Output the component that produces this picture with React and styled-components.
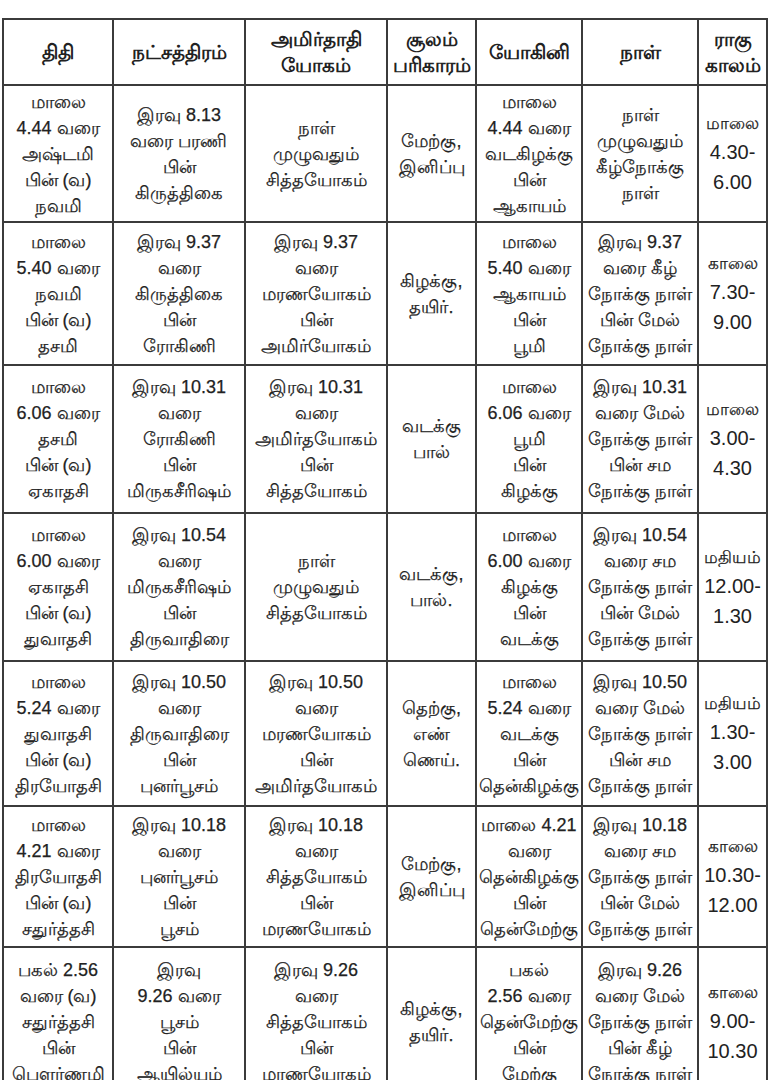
import styled, { createGlobalStyle } from "styled-components";

const GlobalStyle = createGlobalStyle`
  body {
    margin: 0;
    background: #fff;
    font-family: "Liberation Sans", "Noto Sans", sans-serif;
    color: #222;
  }
`;

const Page = styled.div`
  padding: 18px 0 0 2px;
  overflow: hidden;
`;

const Table = styled.table`
  border-collapse: collapse;
  table-layout: fixed;
  width: 764px;
`;

const Head = styled.th`
  border: 2.5px solid #3b3b3b;
  height: 64px;
  padding: 0;
  font-size: 20px;
  font-weight: 700;
  line-height: 26px;
  text-align: center;
  vertical-align: middle;
  white-space: nowrap;
  overflow: hidden;
`;

const Row = styled.tr`
  height: ${(p) => p.$h}px;
`;

const Cell = styled.td`
  border: 2.5px solid #3b3b3b;
  padding: 2px 0;
  font-size: 18px;
  font-weight: 400;
  line-height: 26px;
  text-align: center;
  vertical-align: middle;
  white-space: nowrap;
  overflow: hidden;
  -webkit-text-stroke: 0.25px #222;
`;

const Label = styled.span`
  font-size: 17px;
`;

const Time = styled.span`
  font-size: 20px;
  line-height: 30px;
  -webkit-text-stroke: 0;
`;

const cols = [110, 132, 142, 89, 106, 116, 69];

const heads = [
  ["திதி"],
  ["நட்சத்திரம்"],
  ["அமிர்தாதி", "யோகம்"],
  ["சூலம்", "பரிகாரம்"],
  ["யோகினி"],
  ["நாள்"],
  ["ராகு", "காலம்"],
];

const rows = [
  {
    h: 137,
    cells: [
      ["மாலை", "4.44 வரை", "அஷ்டமி", "பின் (வ)", "நவமி"],
      ["இரவு 8.13", "வரை பரணி", "பின்", "கிருத்திகை"],
      ["நாள்", "முழுவதும்", "சித்தயோகம்"],
      ["மேற்கு,", "இனிப்பு"],
      ["மாலை", "4.44 வரை", "வடகிழக்கு", "பின்", "ஆகாயம்"],
      ["நாள்", "முழுவதும்", "கீழ்நோக்கு", "நாள்"],
    ],
    rahu: ["மாலை", "4.30-", "6.00"],
  },
  {
    h: 143,
    cells: [
      ["மாலை", "5.40 வரை", "நவமி", "பின் (வ)", "தசமி"],
      ["இரவு 9.37", "வரை", "கிருத்திகை", "பின்", "ரோகிணி"],
      ["இரவு 9.37", "வரை", "மரணயோகம்", "பின்", "அமிர்யோகம்"],
      ["கிழக்கு,", "தயிர்."],
      ["மாலை", "5.40 வரை", "ஆகாயம்", "பின்", "பூமி"],
      ["இரவு 9.37", "வரை கீழ்", "நோக்கு நாள்", "பின் மேல்", "நோக்கு நாள்"],
    ],
    rahu: ["காலை", "7.30-", "9.00"],
  },
  {
    h: 148,
    cells: [
      ["மாலை", "6.06 வரை", "தசமி", "பின் (வ)", "ஏகாதசி"],
      ["இரவு 10.31", "வரை", "ரோகிணி", "பின்", "மிருகசீரிஷம்"],
      ["இரவு 10.31", "வரை", "அமிர்தயோகம்", "பின்", "சித்தயோகம்"],
      ["வடக்கு", "பால்"],
      ["மாலை", "6.06 வரை", "பூமி", "பின்", "கிழக்கு"],
      ["இரவு 10.31", "வரை மேல்", "நோக்கு நாள்", "பின் சம", "நோக்கு நாள்"],
    ],
    rahu: ["மாலை", "3.00-", "4.30"],
  },
  {
    h: 148,
    cells: [
      ["மாலை", "6.00 வரை", "ஏகாதசி", "பின் (வ)", "துவாதசி"],
      ["இரவு 10.54", "வரை", "மிருகசீரிஷம்", "பின்", "திருவாதிரை"],
      ["நாள்", "முழுவதும்", "சித்தயோகம்"],
      ["வடக்கு,", "பால்."],
      ["மாலை", "6.00 வரை", "கிழக்கு", "பின்", "வடக்கு"],
      ["இரவு 10.54", "வரை சம", "நோக்கு நாள்", "பின் மேல்", "நோக்கு நாள்"],
    ],
    rahu: ["மதியம்", "12.00-", "1.30"],
  },
  {
    h: 145,
    cells: [
      ["மாலை", "5.24 வரை", "துவாதசி", "பின் (வ)", "திரயோதசி"],
      ["இரவு 10.50", "வரை", "திருவாதிரை", "பின்", "புனர்பூசம்"],
      ["இரவு 10.50", "வரை", "மரணயோகம்", "பின்", "அமிர்தயோகம்"],
      ["தெற்கு,", "எண்", "ணெய்."],
      ["மாலை", "5.24 வரை", "வடக்கு", "பின்", "தென்கிழக்கு"],
      ["இரவு 10.50", "வரை மேல்", "நோக்கு நாள்", "பின் சம", "நோக்கு நாள்"],
    ],
    rahu: ["மதியம்", "1.30-", "3.00"],
  },
  {
    h: 141,
    cells: [
      ["மாலை", "4.21 வரை", "திரயோதசி", "பின் (வ)", "சதுர்த்தசி"],
      ["இரவு 10.18", "வரை", "புனர்பூசம்", "பின்", "பூசம்"],
      ["இரவு 10.18", "வரை", "சித்தயோகம்", "பின்", "மரணயோகம்"],
      ["மேற்கு,", "இனிப்பு"],
      ["மாலை 4.21", "வரை", "தென்கிழக்கு", "பின்", "தென்மேற்கு"],
      ["இரவு 10.18", "வரை சம", "நோக்கு நாள்", "பின் மேல்", "நோக்கு நாள்"],
    ],
    rahu: ["காலை", "10.30-", "12.00"],
  },
  {
    h: 150,
    cells: [
      ["பகல் 2.56", "வரை (வ)", "சதுர்த்தசி", "பின்", "பௌர்ணமி"],
      ["இரவு", "9.26 வரை", "பூசம்", "பின்", "ஆயில்யம்"],
      ["இரவு 9.26", "வரை", "சித்தயோகம்", "பின்", "மரணயோகம்"],
      ["கிழக்கு,", "தயிர்."],
      ["பகல்", "2.56 வரை", "தென்மேற்கு", "பின்", "மேற்கு"],
      ["இரவு 9.26", "வரை மேல்", "நோக்கு நாள்", "பின் கீழ்", "நோக்கு நாள்"],
    ],
    rahu: ["காலை", "9.00-", "10.30"],
  },
];

function Lines({ items }) {
  return items.map((t, i) => (
    <span key={i}>
      {i > 0 && <br />}
      {t}
    </span>
  ));
}

export default function App() {
  return (
    <Page>
      <GlobalStyle />
      <Table>
        <colgroup>
          {cols.map((w, i) => (
            <col key={i} style={{ width: w }} />
          ))}
        </colgroup>
        <thead>
          <tr>
            {heads.map((h, i) => (
              <Head key={i}>
                <Lines items={h} />
              </Head>
            ))}
          </tr>
        </thead>
        <tbody>
          {rows.map((r, i) => (
            <Row key={i} $h={r.h}>
              {r.cells.map((c, j) => (
                <Cell key={j}>
                  <Lines items={c} />
                </Cell>
              ))}
              <Cell>
                <Label>{r.rahu[0]}</Label>
                <br />
                <Time>{r.rahu[1]}</Time>
                <br />
                <Time>{r.rahu[2]}</Time>
              </Cell>
            </Row>
          ))}
        </tbody>
      </Table>
    </Page>
  );
}
